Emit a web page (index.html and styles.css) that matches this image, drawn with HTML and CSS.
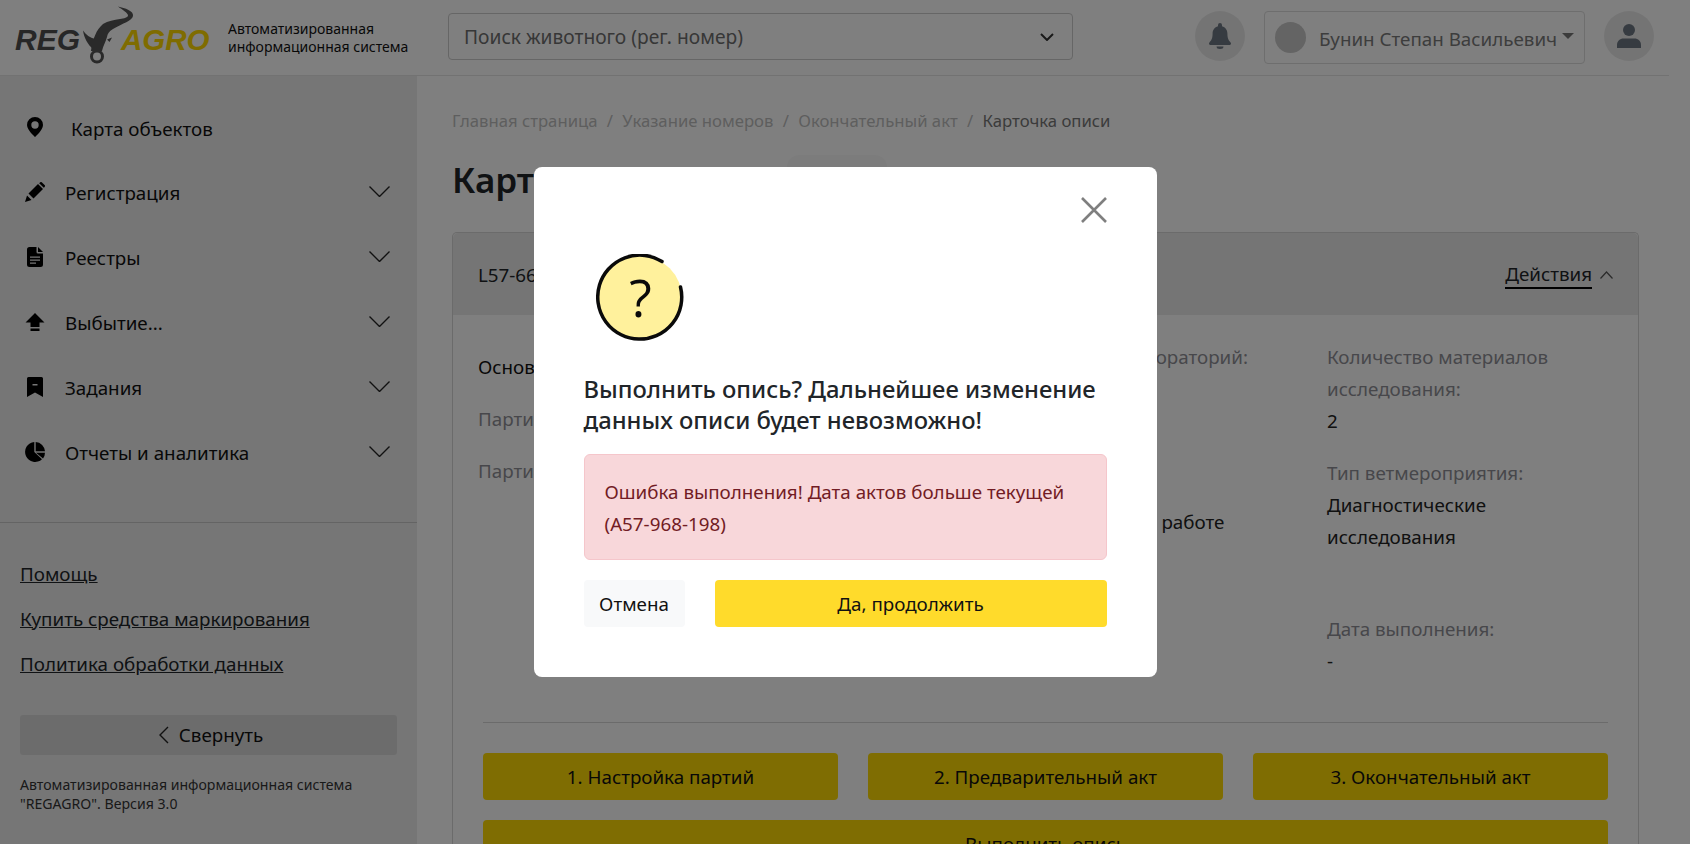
FILE: index.html
```html
<!DOCTYPE html>
<html lang="ru">
<head>
<meta charset="utf-8">
<title>REGAGRO</title>
<link rel="stylesheet" href="styles.css">
</head>
<body>
<div class="page">
  <header class="topbar">
    <div class="brand">
      <svg class="logo" viewBox="0 0 200 60" width="200" height="60">
        <text class="logo-reg" x="0" y="42">REG</text>
        <path class="logo-bull" d="M103-1.500C110 0 119 3 118 8C117 13 108 15 98 21C94 23 92.500 26 92 29C91 33 88 38 87 43L76 43C76.500 37 78 32 80 27.500C82 22 85 19 88 16C93 13 99 12 105 11C109 10.500 113 9.500 113 7.500C113 5 107 1.500 103-1.500Z"/>
        <path class="logo-bull" d="M68 22.500C71 27 75 29.500 80 31L78 41C73 37 69 30 68 22.500Z"/>
        <path class="logo-bull" d="M92 31.500L97 29.500L94.500 34Z"/>
        <circle class="logo-ring" cx="82" cy="48.500" r="5.500"/>
        <text class="logo-agro" x="106" y="42">AGRO</text>
      </svg>
      <div class="tagline">Автоматизированная<br>информационная система</div>
    </div>
    <div class="search">
      <span>Поиск животного (рег. номер)</span>
      <svg class="search-chevron" viewBox="0 0 14 8" width="14" height="8"><path d="M1 1l6 6 6-6"/></svg>
    </div>
    <div class="top-actions">
      <div class="round-btn">
        <svg viewBox="0 0 22 26" width="22" height="26"><path class="ic-top" d="M11 0a2 2 0 0 0-2 2v1.200C5.600 4 3.600 7 3.600 10.500c0 5.400-1.600 7.200-3 8.700-.5.5-.6 1-.6 1.300 0 .8.6 1.500 1.600 1.500h18.800c1 0 1.600-.7 1.600-1.500 0-.3-.1-.8-.6-1.300-1.400-1.500-3-3.300-3-8.700 0-3.500-2-6.500-5.400-7.300V2a2 2 0 0 0-2-2z"/><path class="ic-top" d="M7.500 23.500a3.500 2.500 0 0 0 7 0z"/></svg>
      </div>
      <div class="user-select">
        <span class="avatar"></span>
        <span class="user-name">Бунин Степан Васильевич</span>
        <span class="caret"></span>
      </div>
      <div class="round-btn">
        <svg viewBox="0 0 24 24" width="24" height="24"><circle class="ic-top" cx="12" cy="6" r="6"/><path class="ic-top" d="M0 24v-3c0-4 3-6.500 6.500-6.500h11c3.500 0 6.500 2.500 6.500 6.500v3z"/></svg>
      </div>
    </div>
  </header>

  <div class="content">
    <aside class="sidebar">
      <nav class="menu">
        <a class="menu-item menu-item-plain">
          <svg class="menu-icon" viewBox="0 0 20 20" width="20" height="20"><path fill-rule="evenodd" d="M10 0a8 8 0 0 0-8 8c0 5 8 12 8 12s8-7 8-12a8 8 0 0 0-8-8zm0 4.300a3.700 3.700 0 1 1 0 7.400 3.700 3.700 0 0 1 0-7.400z"/></svg>
          <span class="menu-label">Карта объектов</span>
        </a>
        <a class="menu-item">
          <svg class="menu-icon" viewBox="0 0 20 20" width="20" height="20"><path d="M0 20l2-6.500 4.500 4.500z"/><path d="M3.500 11.500L13 2l5 5-9.500 9.500z"/><path d="M14.200 1.200l.8-.8a1.500 1.500 0 0 1 2 0l2.600 2.600a1.500 1.500 0 0 1 0 2l-.8.8z"/></svg>
          <span class="menu-label">Регистрация</span>
          <svg class="menu-chevron" viewBox="0 0 21 11" width="21" height="11"><path d="M.5.500l10 10 10-10"/></svg>
        </a>
        <a class="menu-item">
          <svg class="menu-icon" viewBox="0 0 20 20" width="20" height="20"><path d="M4.500 0H11.500V5a1.500 1.500 0 0 0 1.500 1.500H18V17.500A2.500 2.500 0 0 1 15.500 20H4.500A2.500 2.500 0 0 1 2 17.500V2.500A2.500 2.500 0 0 1 4.500 0z"/><path d="M13 0l5 5h-5z"/><path class="ic-cut" d="M5 9.500h10v1.300H5zM5 12.500h10v1.300H5zM5 15.500h6v1.300H5z"/></svg>
          <span class="menu-label">Реестры</span>
          <svg class="menu-chevron" viewBox="0 0 21 11" width="21" height="11"><path d="M.5.500l10 10 10-10"/></svg>
        </a>
        <a class="menu-item">
          <svg class="menu-icon" viewBox="0 0 20 20" width="20" height="20"><path d="M10 1l9.500 9.500H14.500V15h-9V10.500H.5z"/><path d="M5.500 16.500h9V19h-9z"/></svg>
          <span class="menu-label">Выбытие...</span>
          <svg class="menu-chevron" viewBox="0 0 21 11" width="21" height="11"><path d="M.5.500l10 10 10-10"/></svg>
        </a>
        <a class="menu-item">
          <svg class="menu-icon" viewBox="0 0 20 20" width="20" height="20"><path d="M3.500 0h13A1.500 1.500 0 0 1 18 1.500V20l-8-4.500L2 20V1.500A1.500 1.500 0 0 1 3.500 0z"/><path class="ic-cut" d="M7.500 7h5v1.500h-5z"/></svg>
          <span class="menu-label">Задания</span>
          <svg class="menu-chevron" viewBox="0 0 21 11" width="21" height="11"><path d="M.5.500l10 10 10-10"/></svg>
        </a>
        <a class="menu-item">
          <svg class="menu-icon" viewBox="0 0 20 20" width="20" height="20"><path d="M9.300 0A10 10 0 1 0 17 17.200L9.300 10z"/><path d="M10.700 0V9.300H20A10 10 0 0 0 10.700 0z"/><path d="M11 10.700H20A10 10 0 0 1 18 16.500z"/></svg>
          <span class="menu-label">Отчеты и аналитика</span>
          <svg class="menu-chevron" viewBox="0 0 21 11" width="21" height="11"><path d="M.5.500l10 10 10-10"/></svg>
        </a>
      </nav>
      <div class="side-bottom">
        <a class="side-link">Помощь</a>
        <a class="side-link">Купить средства маркирования</a>
        <a class="side-link">Политика обработки данных</a>
        <div class="collapse-btn">
          <svg viewBox="0 0 10 18" width="10" height="18"><path d="M9 1L1 9l8 8"/></svg>
          <span>Свернуть</span>
        </div>
        <p class="side-note">Автоматизированная информационная система<br>"REGAGRO". Версия 3.0</p>
      </div>
    </aside>

    <main class="main">
      <nav class="crumbs">
        <span>Главная страница</span><i>/</i><span>Указание номеров</span><i>/</i><span>Окончательный акт</span><i>/</i><span class="crumb-current">Карточка описи</span>
      </nav>
      <div class="title-row">
        <h1>Карточка описи</h1>
        <span class="title-pill"></span>
      </div>
      <section class="card">
        <div class="card-head">
          <span>L57-669-201</span>
          <span class="actions"><span class="actions-link">Действия</span>
            <svg viewBox="0 0 13 8" width="13" height="8"><path d="M.5 7.500l6-6.500 6 6.500"/></svg>
          </span>
        </div>
        <div class="info">
          <div class="info-col info-left">
            <div class="info-row info-strong">Основная информация</div>
            <div class="info-row info-label">Партия</div>
            <div class="info-row info-label">Партия</div>
          </div>
          <div class="info-col info-third">
            <div class="info-label">Наименование лабораторий:</div>
            <div class="info-spacer"></div>
            <div class="info-value">Опись находится в работе</div>
          </div>
          <div class="info-col info-last">
            <div class="info-label">Количество материалов исследования:</div>
            <div class="info-value">2</div>
            <div class="info-label info-gap">Тип ветмероприятия:</div>
            <div class="info-value">Диагностические исследования</div>
            <div class="info-label info-gap-lg">Дата выполнения:</div>
            <div class="info-value">-</div>
          </div>
        </div>
        <div class="card-actions">
          <a class="btn-yellow">1. Настройка партий</a>
          <a class="btn-yellow">2. Предварительный акт</a>
          <a class="btn-yellow">3. Окончательный акт</a>
          <a class="btn-yellow btn-wide">Выполнить опись</a>
        </div>
      </section>
    </main>
  </div>
</div>

<div class="backdrop">
  <div class="modal">
    <svg class="modal-close" viewBox="0 0 26 26" width="26" height="26"><path d="M1 1l24 24M25 1L1 25"/></svg>
    <svg class="modal-icon" viewBox="0 0 88 88" width="88" height="88">
      <circle class="q-fill" cx="44" cy="44" r="42"/>
      <path class="q-ring" d="M66 7.500A42 42 0 1 0 84.500 33"/>
      <text class="q-mark" x="44.500" y="63">?</text>
    </svg>
    <h2>Выполнить опись? Дальнейшее изменение данных описи будет невозможно!</h2>
    <div class="alert">Ошибка выполнения! Дата актов больше текущей (А57-968-198)</div>
    <div class="modal-actions">
      <a class="btn-cancel">Отмена</a>
      <a class="btn-confirm">Да, продолжить</a>
    </div>
  </div>
</div>
</body>
</html>
```
FILE: styles.css
```css
* { box-sizing: border-box; }
html, body { margin: 0; height: 100%; overflow: hidden; }
body {
  font-family: "Noto Sans", "Open Sans", sans-serif;
  font-size: 18.8px;
  line-height: 32px;
  color: #212529;
  background: #fff;
}
.page { width: 1690px; height: 844px; overflow: hidden; display: flex; flex-direction: column; }

.topbar {
  width: 1669px;
  height: 76px;
  flex: none;
  display: flex;
  align-items: center;
  padding-right: 15px;
  border-bottom: 1px solid #e4e4e4;
}
.brand { width: 448px; flex: none; display: flex; align-items: center; padding-left: 15px; }
.logo { flex: none; margin-right: 13px; overflow: visible; }
.logo-reg, .logo-agro { font-family: "Liberation Sans", sans-serif; font-weight: 700; font-style: italic; }
.logo-reg { fill: #4f4f4f; font-size: 30px; }
.logo-agro { fill: #ffd800; font-size: 29.5px; }
.logo-bull { fill: #555; }
.logo-ring { fill: none; stroke: #555; stroke-width: 3px; }
.tagline { font-size: 14px; line-height: 18px; color: #111; white-space: nowrap; }

.search {
  width: 625px;
  height: 47px;
  flex: none;
  margin-bottom: 2px;
  padding: 0 18px 0 15px;
  display: flex;
  align-items: center;
  justify-content: space-between;
  border: 1px solid #ccc;
  border-radius: 4px;
  font-size: 19.2px;
  color: #6e6e6e;
}
.search-chevron path { fill: none; stroke: #333; stroke-width: 2px; }

.top-actions { margin-left: auto; display: flex; align-items: flex-start; gap: 19px; height: 53px; }
.round-btn {
  width: 50px; height: 50px; border-radius: 50%;
  background: #e9e9e9;
  display: flex; align-items: center; justify-content: center;
}
.ic-top { fill: #6d7782; }
.user-select {
  width: 321px; height: 53px;
  display: flex; align-items: center;
  padding-left: 10px;
  border: 1px solid #dcdcdc;
  border-radius: 4px;
  color: #7a7a7a;
  font-size: 18.8px;
}
.avatar { width: 31px; height: 31px; border-radius: 50%; background: #c8c8c8; margin-right: 13px; flex: none; }
.user-name { white-space: nowrap; padding-top: 2px; }
.caret { width: 0; height: 0; margin-left: 5px; margin-bottom: 4px; border-left: 6px solid transparent; border-right: 6px solid transparent; border-top: 6px solid #777; }

.content { flex: 1; display: flex; min-height: 0; }
.sidebar { width: 417px; flex: none; background: #ededed; display: flex; flex-direction: column; }
.menu { padding: 18px 0 38px; }
.menu-item { height: 65px; display: flex; align-items: center; padding: 0 27px 0 25px; color: #111; }
.menu-icon { flex: none; margin-right: 20px; }
.menu-item-plain .menu-icon { margin-right: 26px; }
.menu-label { flex: 1; padding-top: 3px; }
.menu-item-plain .menu-label { padding-top: 5px; }
.menu-chevron { flex: none; }
.menu-chevron path { fill: none; stroke: #222; stroke-width: 1.4px; }
.ic-cut { fill: #ededed; }

.side-bottom { border-top: 1px solid #c8c8c8; padding: 29px 20px 0; }
.side-link { display: block; height: 45px; line-height: 45px; color: #212529; text-decoration: underline; }
.collapse-btn {
  margin-top: 28px; height: 40px;
  padding-left: 5px;
  display: flex; align-items: center; justify-content: center; gap: 10px;
  background: #d9d9d9; border-radius: 3px; color: #111;
}
.collapse-btn svg path { fill: none; stroke: #222; stroke-width: 1.4px; }
.side-note { margin: 20px 0 0; font-size: 14.1px; line-height: 19px; color: #333; }

.main { flex: 1; min-width: 0; padding: 29px 51px 0 35px; }
.crumbs { height: 32px; font-size: 16.7px; line-height: 32px; color: #bdbdbd; white-space: nowrap; }
.crumbs i { font-style: normal; margin: 0 9.300px; }
.crumb-current { color: #777; }
.title-row { height: 95px; display: flex; align-items: flex-start; position: relative; }
h1 { margin: 0; padding-top: 20px; font-size: 35px; line-height: 46px; font-weight: 600; color: #212529; white-space: nowrap; }
.title-pill { position: absolute; left: 335px; top: 18px; width: 100px; height: 40px; border-radius: 12px; background: #f9f9f9; z-index: -1; }

.card { width: 1187px; border: 1px solid #d6d6d6; border-bottom: 0; border-radius: 5px 5px 0 0; }
.card-head {
  height: 82px;
  display: flex; align-items: center; justify-content: space-between;
  padding: 2px 25px 0 25px;
  background: #ebebeb;
  border-radius: 5px 5px 0 0;
}
.actions { display: flex; align-items: center; gap: 8px; }
.actions-link { border-bottom: 2px solid #000; line-height: 26px; }
.actions svg path { fill: none; stroke: #555; stroke-width: 1.2px; }

.info { display: grid; grid-template-columns: 502px 347px 260px; padding: 26px 0 0 25px; height: 407px; }
.info-left { padding-top: 10px; }
.info-row { margin-bottom: 20px; white-space: nowrap; }
.info-strong { color: #111; }
.info-label { color: #8f8f96; }
.info-value { color: #222; }
.info-third .info-label { white-space: nowrap; }
.info-third .info-value { padding-left: 6px; white-space: nowrap; }
.info-spacer { height: 133px; }
.info-gap { margin-top: 20px; }
.info-gap-lg { margin-top: 60px; }

.card-actions {
  margin: 0 30px;
  padding-top: 30px;
  border-top: 1px solid #d6d6d6;
  display: grid;
  grid-template-columns: repeat(3, 1fr);
  gap: 20px 30px;
}
.btn-yellow { height: 47px; display: flex; align-items: center; justify-content: center; background: #ffdb05; border-radius: 4px; color: #111; }
.btn-wide { grid-column: 1 / -1; }

.backdrop {
  position: fixed; inset: 0;
  background: rgba(0, 0, 0, .5);
  display: flex; justify-content: center; align-items: flex-start;
  padding-top: 167px;
}
.modal {
  position: relative;
  width: 623px; height: 510px;
  background: #fff;
  border-radius: 8px;
  padding: 87px 50px 50px;
}
.modal-close { position: absolute; top: 30px; right: 50px; }
.modal-close path { fill: none; stroke: #7f7f7f; stroke-width: 2.6px; }
.modal-icon { display: block; margin-left: 12px; }
.q-fill { fill: #fff19c; }
.q-ring { fill: none; stroke: #0a0a0a; stroke-width: 3.5px; stroke-linecap: round; }
.q-mark { font-family: "Open Sans", sans-serif; font-weight: 400; font-size: 52px; text-anchor: middle; fill: #0a0a0a; }
h2 { margin: 32px 0 18px; font-size: 23.8px; line-height: 31px; font-weight: 500; color: #212529; }
.alert {
  height: 106px;
  padding: 21px 19px 19px 20px;
  background: #f8d7da;
  border: 1px solid #f5c6cb;
  border-radius: 6px;
  color: #721c24;
}
.modal-actions { margin-top: 20px; display: flex; gap: 30px; }
.btn-cancel { width: 101px; height: 47px; display: flex; align-items: center; justify-content: center; background: #f8f9fa; border-radius: 4px; color: #111; }
.btn-confirm { flex: 1; height: 47px; display: flex; align-items: center; justify-content: center; background: #ffdb2b; border-radius: 4px; color: #111; }
```
